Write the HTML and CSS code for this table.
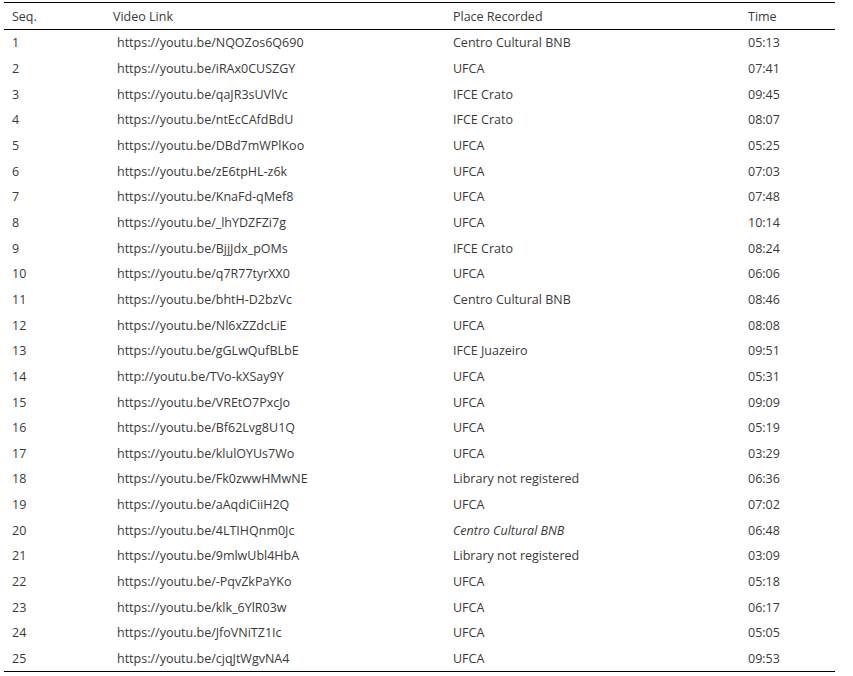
FILE: index.html
```html
<!DOCTYPE html>
<html lang="en">

<head>
    <meta charset="UTF-8">
    <meta name="viewport" content="width=device-width, initial-scale=1.0">
    <title>Video recordings</title>
    <link rel="stylesheet" href="styles.css">
</head>

<body>
    <table class="videoTable">
        <thead>
            <tr>
                <th class="seq">Seq.</th>
                <th class="link">Video Link</th>
                <th class="place">Place Recorded</th>
                <th class="time">Time</th>
            </tr>
        </thead>
        <tbody>
            <tr><td>1</td><td class="url">https://youtu.be/NQOZos6Q690</td><td>Centro Cultural BNB</td><td>05:13</td></tr>
            <tr><td>2</td><td class="url">https://youtu.be/iRAx0CUSZGY</td><td>UFCA</td><td>07:41</td></tr>
            <tr><td>3</td><td class="url">https://youtu.be/qaJR3sUVlVc</td><td>IFCE Crato</td><td>09:45</td></tr>
            <tr><td>4</td><td class="url">https://youtu.be/ntEcCAfdBdU</td><td>IFCE Crato</td><td>08:07</td></tr>
            <tr><td>5</td><td class="url">https://youtu.be/DBd7mWPlKoo</td><td>UFCA</td><td>05:25</td></tr>
            <tr><td>6</td><td class="url">https://youtu.be/zE6tpHL-z6k</td><td>UFCA</td><td>07:03</td></tr>
            <tr><td>7</td><td class="url">https://youtu.be/KnaFd-qMef8</td><td>UFCA</td><td>07:48</td></tr>
            <tr><td>8</td><td class="url">https://youtu.be/_lhYDZFZi7g</td><td>UFCA</td><td>10:14</td></tr>
            <tr><td>9</td><td class="url">https://youtu.be/BjjJdx_pOMs</td><td>IFCE Crato</td><td>08:24</td></tr>
            <tr><td>10</td><td class="url">https://youtu.be/q7R77tyrXX0</td><td>UFCA</td><td>06:06</td></tr>
            <tr><td>11</td><td class="url">https://youtu.be/bhtH-D2bzVc</td><td>Centro Cultural BNB</td><td>08:46</td></tr>
            <tr><td>12</td><td class="url">https://youtu.be/Nl6xZZdcLiE</td><td>UFCA</td><td>08:08</td></tr>
            <tr><td>13</td><td class="url">https://youtu.be/gGLwQufBLbE</td><td>IFCE Juazeiro</td><td>09:51</td></tr>
            <tr><td>14</td><td class="url">http://youtu.be/TVo-kXSay9Y</td><td>UFCA</td><td>05:31</td></tr>
            <tr><td>15</td><td class="url">https://youtu.be/VREtO7PxcJo</td><td>UFCA</td><td>09:09</td></tr>
            <tr><td>16</td><td class="url">https://youtu.be/Bf62Lvg8U1Q</td><td>UFCA</td><td>05:19</td></tr>
            <tr><td>17</td><td class="url">https://youtu.be/klulOYUs7Wo</td><td>UFCA</td><td>03:29</td></tr>
            <tr><td>18</td><td class="url">https://youtu.be/Fk0zwwHMwNE</td><td>Library not registered</td><td>06:36</td></tr>
            <tr><td>19</td><td class="url">https://youtu.be/aAqdiCiiH2Q</td><td>UFCA</td><td>07:02</td></tr>
            <tr><td>20</td><td class="url">https://youtu.be/4LTIHQnm0Jc</td><td><i>Centro Cultural BNB</i></td><td>06:48</td></tr>
            <tr><td>21</td><td class="url">https://youtu.be/9mlwUbl4HbA</td><td>Library not registered</td><td>03:09</td></tr>
            <tr><td>22</td><td class="url">https://youtu.be/-PqvZkPaYKo</td><td>UFCA</td><td>05:18</td></tr>
            <tr><td>23</td><td class="url">https://youtu.be/klk_6YlR03w</td><td>UFCA</td><td>06:17</td></tr>
            <tr><td>24</td><td class="url">https://youtu.be/JfoVNiTZ1Ic</td><td>UFCA</td><td>05:05</td></tr>
            <tr><td>25</td><td class="url">https://youtu.be/cjqJtWgvNA4</td><td>UFCA</td><td>09:53</td></tr>
        </tbody>
    </table>
</body>

</html>
```

FILE: styles.css
```css
body {
    margin: 0;
    background: #fff;
}

.videoTable {
    margin: 2px 0 0 4px;
    width: 831px;
    border-collapse: collapse;
    font-family: "Open Sans", "Noto Sans", sans-serif;
    font-size: 12.5px;
    color: #3a3a3a;
    border-top: 1px solid #000;
    border-bottom: 1px solid #000;
}

th {
    font-weight: normal;
    text-align: left;
    height: 26px;
    padding: 0 0 0 8px;
    border-bottom: 1px solid #000;
}

td {
    height: 25.67px;
    padding: 0 0 0 8px;
    white-space: nowrap;
}

th.seq {
    width: 93px;
}

th.link {
    width: 332px;
}

th.place {
    width: 287px;
}

td.url {
    padding-left: 12px;
}
```
